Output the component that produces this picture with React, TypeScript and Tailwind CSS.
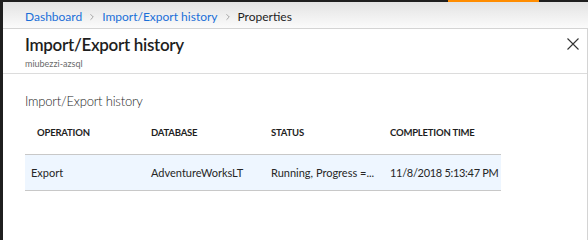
import { ChevronRight } from 'lucide-react';

const rows = [
  {
    operation: 'Export',
    database: 'AdventureWorksLT',
    status: 'Running, Progress =...',
    time: '11/8/2018 5:13:47 PM',
  },
];

export default function App() {
  return (
    <div
      className="flex h-[240px] w-[588px] flex-col overflow-hidden bg-[#1f1f1f] text-[#262626]"
      style={{ fontFamily: 'Lato, "Open Sans", sans-serif' }}
    >
      {/* top bar accent */}
      <div className="flex h-[2px] shrink-0">
        <div className="w-[448px]" />
        <div className="w-[91px] bg-[#ff8c00]" />
      </div>

      <div className="ml-[3px] flex flex-1 flex-col">
        {/* breadcrumb */}
        <div className="flex h-[26px] items-center gap-[5px] bg-gradient-to-b from-[#e3e3e3] to-[#fbfbfb] pl-[22px] pt-[4px] text-[12px]">
          <span className="text-[#1a6fd8]">Dashboard</span>
          <ChevronRight size={10} className="text-[#777]" strokeWidth={1.5} />
          <span className="text-[#1a6fd8]">Import/Export history</span>
          <ChevronRight size={10} className="text-[#777]" strokeWidth={1.5} />
          <span className="text-[#1e1e1e]">Properties</span>
        </div>

        {/* panel */}
        <div className="flex flex-1 flex-col border-t border-r border-[#d4d4d4] bg-white">
          <div className="flex items-start justify-between border-b border-[#dcdcdc] pl-[22px] pr-[8px] pt-[5px] pb-[3px]">
            <div className="flex flex-col">
              <h1 className="text-[17px] leading-[22px] font-semibold tracking-[-0.3px] text-[#1e1e1e]">
                Import/Export history
              </h1>
              <span className="mt-[2px] text-[9px] leading-[12px] text-[#6b6b6b]">
                miubezzi-azsql
              </span>
            </div>
            <svg width="12" height="12" viewBox="0 0 12 12" className="mt-[4px] text-[#333]">
              <path d="M0.5 0.5 L11.5 11.5 M11.5 0.5 L0.5 11.5" stroke="currentColor" strokeWidth="1.1" />
            </svg>
          </div>

          <div className="pl-[22px] pr-[86px] pt-[18px]">
            <h2 className="text-[13px] leading-[18px] font-light tracking-[-0.2px] text-[#262626]">
              Import/Export history
            </h2>
            <table className="mt-[3px] w-full table-fixed border-collapse text-[11px] whitespace-nowrap">
              <thead>
                <tr className="border-b border-[#c8c8c8] text-left text-[9.5px] font-bold tracking-[-0.2px] text-[#1e1e1e]">
                  <th className="h-[41px] w-[126px] pl-[12px] font-bold">OPERATION</th>
                  <th className="w-[120px] font-bold">DATABASE</th>
                  <th className="w-[119px] font-bold">STATUS</th>
                  <th className="font-bold">COMPLETION TIME</th>
                </tr>
              </thead>
              <tbody>
                {rows.map((r) => (
                  <tr key={r.time} className="border-b border-[#c8c8c8] bg-[#eef6ff]">
                    <td className="h-[36px] pl-[6px] pt-[2px]">{r.operation}</td>
                    <td className="pt-[2px]">{r.database}</td>
                    <td className="pt-[2px]">{r.status}</td>
                    <td className="pt-[2px] tracking-[-0.3px]">{r.time}</td>
                  </tr>
                ))}
              </tbody>
            </table>
          </div>
        </div>
      </div>
    </div>
  );
}
